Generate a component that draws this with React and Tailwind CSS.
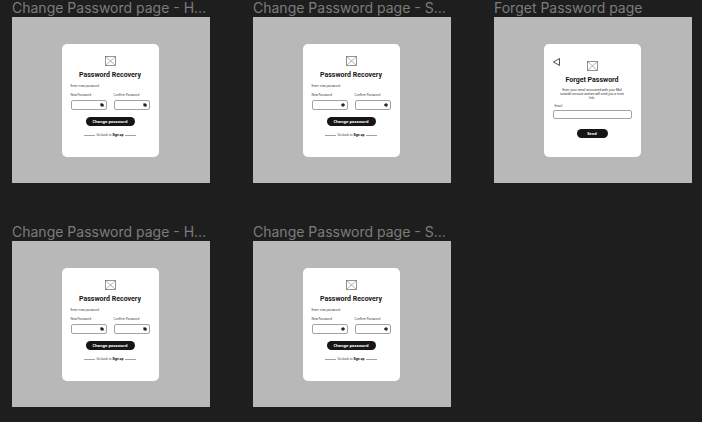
import React, { useId } from "react";

const FRAMES = [
  { title: "Change Password page - H…", kind: "change", eye: "slash" },
  { title: "Change Password page - S…", kind: "change", eye: "open" },
  { title: "Forget Password page", kind: "forget" },
  { title: "Change Password page - H…", kind: "change", eye: "slash" },
  { title: "Change Password page - S…", kind: "change", eye: "open" },
];

function PlaceholderIcon() {
  return (
    <svg viewBox="0 0 11 10" className="h-[10px] w-[11px] shrink-0" fill="none" stroke="#666" aria-hidden="true">
      <rect x="0.5" y="0.5" width="10" height="9" strokeWidth="0.7" />
      <path d="M0.5 0.5 10.5 9.5M10.5 0.5 0.5 9.5" strokeWidth="0.5" />
    </svg>
  );
}

function EyeIcon({ type }) {
  return (
    <svg viewBox="0 0 4 4" className="h-[4px] w-[4px]" aria-hidden="true">
      <path d="M0 2Q2 -1.4 4 2Q2 5.4 0 2Z" fill="#111" />
      <circle cx="2" cy="2" r="0.5" fill="#999" />
      {type === "slash" && <path d="M0.5 0.3 3.5 3.7" stroke="#111" strokeWidth="0.6" />}
    </svg>
  );
}

function PasswordField({ label, eye }) {
  const id = useId();
  return (
    <div className="min-w-0 flex-1">
      <label htmlFor={id} className="block whitespace-nowrap text-[3px] leading-[4px] text-[#333]">{label}</label>
      <div className="mt-[3px] flex h-[10px] items-center rounded-[2px] border border-[#a3a3a3] pr-[2px]">
        <input id={id} type="password" className="h-full w-0 min-w-0 flex-1 text-[4px] outline-none" />
        <button type="button" aria-label="Toggle password visibility">
          <EyeIcon type={eye} />
        </button>
      </div>
    </div>
  );
}

function Card({ children }) {
  return (
    <div className="flex h-[113px] w-[97px] flex-col items-center rounded-[5px] bg-white px-[9px] text-[#171515]">
      {children}
    </div>
  );
}

function CardTitle({ children }) {
  return (
    <h2 className="mt-[5px] whitespace-nowrap font-['Roboto',sans-serif] text-[7px] leading-[9px] font-bold">
      {children}
    </h2>
  );
}

function ChangeCard({ eye }) {
  return (
    <Card>
      <div className="mt-[12px]">
        <PlaceholderIcon />
      </div>
      <CardTitle>Password Recovery</CardTitle>
      <p className="mt-[4px] self-start text-[3px] leading-[4px] text-[#333]">Enter new password</p>
      <div className="mt-[5px] flex gap-[7px] self-stretch">
        <PasswordField label="New Password" eye={eye} />
        <PasswordField label="Confirm Password" eye={eye} />
      </div>
      <button type="button" className="mt-[7px] h-[9px] w-[49px] whitespace-nowrap rounded-full bg-[#171515] text-[4px] leading-[9px] font-bold text-white">
        Change password
      </button>
      <div className="mt-[7px] flex items-center gap-[2px] whitespace-nowrap text-[3px] leading-[4px] text-[#333]">
        <span className="h-px w-[11px] bg-[#a3a3a3]" />
        <p>
          Go back to <a href="#signup" className="font-bold text-black">Sign up</a>
        </p>
        <span className="h-px w-[11px] bg-[#a3a3a3]" />
      </div>
    </Card>
  );
}

function ForgetCard() {
  const id = useId();
  return (
    <Card>
      <button type="button" aria-label="Back" className="mt-[14px] -mb-[5px] self-start">
        <svg viewBox="0 0 8 8" className="h-[8px] w-[8px]" fill="none" stroke="#222" strokeWidth="0.8" aria-hidden="true">
          <path d="M6.5 0.5V7.5L0.5 4Z" />
        </svg>
      </button>
      <PlaceholderIcon />
      <CardTitle>Forget Password</CardTitle>
      <p className="mt-[3px] whitespace-nowrap text-center text-[3px] leading-[4px] text-[#222]">
        Enter your email associated with your Mail
        <br />
        taskedit account and we will send you a reset
        <br />
        link.
      </p>
      <label htmlFor={id} className="mt-[4px] ml-[2px] self-start text-[3px] leading-[4px] text-[#333]">Email</label>
      <input id={id} type="email" className="mt-[2px] h-[9px] w-full rounded-[2px] border border-[#a3a3a3] px-[2px] text-[4px] outline-none" />
      <button type="button" className="mt-[10px] h-[9px] w-[31px] rounded-full bg-[#171515] text-[4px] leading-[9px] font-bold text-white">
        Send
      </button>
    </Card>
  );
}

export default function App() {
  return (
    <main className="min-h-screen bg-[#1e1e1e] pr-[10px] pb-[15px] pl-[12px] font-['Noto_Sans',sans-serif]">
      <div className="grid grid-cols-3 gap-x-[43px] gap-y-[41px]">
        {FRAMES.map((frame, i) => (
          <section key={i} className="min-w-0">
            <h1 className="mb-[2px] whitespace-nowrap font-['Inter',sans-serif] text-[14px] leading-[15px] text-[#7c7c7c]">
              {frame.title}
            </h1>
            <div className="flex h-[166px] justify-center bg-[#b8b8b8] pt-[27px] pr-[2px]">
              {frame.kind === "change" ? <ChangeCard eye={frame.eye} /> : <ForgetCard />}
            </div>
          </section>
        ))}
      </div>
    </main>
  );
}
